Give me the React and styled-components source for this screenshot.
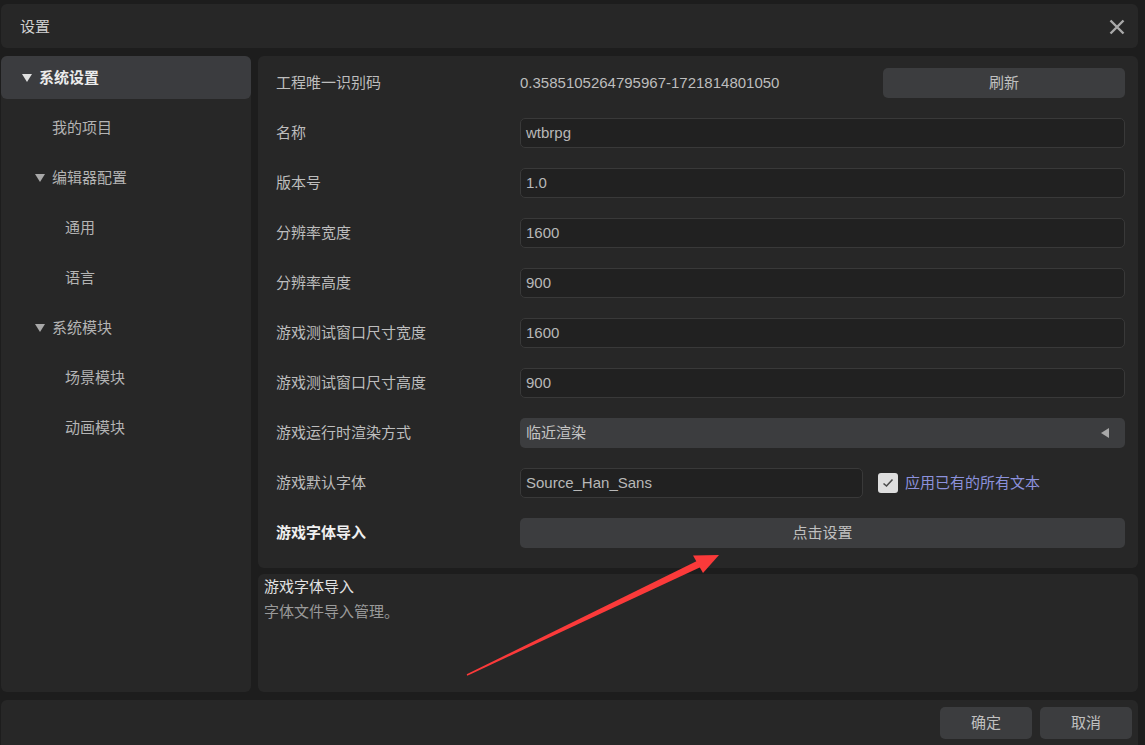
import React from "react";
import styled, { createGlobalStyle } from "styled-components";

const GlobalStyle = createGlobalStyle`
  html, body {
    margin: 0;
    padding: 0;
    background: #1d1d1d;
    font-family: "Liberation Sans", "Noto Sans CJK SC", sans-serif;
    font-size: 15px;
    line-height: 18px;
    color: #bdbdbd;
  }
`;

const Window = styled.div`
  position: relative;
  height: 100vh;
  box-sizing: border-box;
  padding: 4px 7px 0 1px;
  display: flex;
  flex-direction: column;
  gap: 8px;
  overflow: hidden;
`;

const Panel = styled.div`
  box-sizing: border-box;
  background: #272727;
  border-radius: 6px;
`;

const TitleBar = styled(Panel)`
  flex: 0 0 44px;
  display: flex;
  align-items: center;
  justify-content: space-between;
  padding: 1px 13px 0 19px;
  color: #d0d0d0;
`;

const CloseButton = styled.button`
  border: 0;
  background: none;
  padding: 0;
  width: 16px;
  height: 16px;
  display: grid;
  place-items: center;
  cursor: pointer;
`;

const Body = styled.div`
  flex: 0 0 636px;
  display: flex;
  gap: 7px;
`;

const Sidebar = styled(Panel)`
  flex: 0 0 250px;
  display: flex;
  flex-direction: column;
  gap: 7px;
`;

const TreeItem = styled.div`
  height: 43px;
  display: flex;
  align-items: center;
  gap: 7px;
  padding-left: ${({ level, toggle }) => 21 + level * 13 + (toggle ? 0 : 17)}px;
  border-radius: 6px;
  background: ${({ active }) => (active ? "#3b3c3f" : "transparent")};
  color: ${({ active }) => (active ? "#ececec" : "#b4b4b4")};
  font-weight: ${({ active }) => (active ? 700 : 400)};
`;

const Caret = styled.span`
  width: 0;
  height: 0;
  border-left: 5px solid transparent;
  border-right: 5px solid transparent;
  border-top: 8px solid ${({ active }) => (active ? "#e0e0e0" : "#a8a8a8")};
`;

const MainColumn = styled.div`
  flex: 1;
  display: flex;
  flex-direction: column;
  gap: 6px;
`;

const SettingsPanel = styled(Panel)`
  flex: 0 0 512px;
  padding: 12px 13px 0 18px;
  display: flex;
  flex-direction: column;
  gap: 20px;
`;

const Row = styled.div`
  height: 30px;
  display: flex;
  align-items: center;
`;

const Label = styled.div`
  flex: 0 0 244px;
  color: ${({ strong }) => (strong ? "#f0f0f0" : "#bdbdbd")};
  font-weight: ${({ strong }) => (strong ? 700 : 400)};
`;

const Value = styled.div`
  flex: 1;
  color: #bdbdbd;
`;

const Field = styled.div`
  flex: ${({ width }) => (width ? `0 0 ${width}px` : 1)};
  box-sizing: border-box;
  height: 30px;
  display: flex;
  align-items: center;
  padding: 0 6px 0 5px;
  background: #212121;
  border: 1px solid #393939;
  border-radius: 5px;
  color: #b8b8b8;
`;

const Select = styled.div`
  flex: 1;
  height: 30px;
  display: flex;
  align-items: center;
  justify-content: space-between;
  padding: 0 16px 0 6px;
  background: #3c3d3f;
  border-radius: 5px;
  color: #c4c4c4;
`;

const LeftCaret = styled.span`
  width: 0;
  height: 0;
  border-top: 5px solid transparent;
  border-bottom: 5px solid transparent;
  border-right: 8px solid #a8a8a8;
`;

const Button = styled.button`
  flex: ${({ width }) => (width ? `0 0 ${width}px` : 1)};
  height: ${({ tall }) => (tall ? 32 : 30)}px;
  border: 0;
  border-radius: 5px;
  background: #3c3d3f;
  color: #c0c0c0;
  font: inherit;
  cursor: pointer;
`;

const CheckWrap = styled.label`
  display: flex;
  align-items: center;
  gap: 7px;
  margin-left: 15px;
  color: #8c91dc;
`;

const CheckBox = styled.span`
  width: 20px;
  height: 20px;
  border-radius: 3px;
  background: #dedede;
  display: grid;
  place-items: center;
`;

const DescPanel = styled(Panel)`
  flex: 1;
  padding: 4px 6px;
  display: flex;
  flex-direction: column;
  gap: 7px;
`;

const DescTitle = styled.div`
  color: #e2e2e2;
`;

const DescText = styled.div`
  color: #9a9a9a;
`;

const Footer = styled(Panel)`
  flex: 0 0 50px;
  display: flex;
  justify-content: flex-end;
  align-items: flex-start;
  gap: 8px;
  padding: 7px 6px 0 0;
`;

const Annotation = styled.svg`
  position: absolute;
  inset: 0;
  width: 100%;
  height: 100%;
  pointer-events: none;
`;

const tree = [
  { label: "系统设置", level: 0, toggle: true, active: true },
  { label: "我的项目", level: 1 },
  { label: "编辑器配置", level: 1, toggle: true },
  { label: "通用", level: 2 },
  { label: "语言", level: 2 },
  { label: "系统模块", level: 1, toggle: true },
  { label: "场景模块", level: 2 },
  { label: "动画模块", level: 2 },
];

const fields = [
  ["名称", "wtbrpg"],
  ["版本号", "1.0"],
  ["分辨率宽度", "1600"],
  ["分辨率高度", "900"],
  ["游戏测试窗口尺寸宽度", "1600"],
  ["游戏测试窗口尺寸高度", "900"],
];

export default function App() {
  return (
    <>
      <GlobalStyle />
      <Window>
        <TitleBar>
          <span>设置</span>
          <CloseButton aria-label="关闭">
            <svg width="16" height="16" viewBox="0 0 16 16">
              <path d="M1.5 1.5 L14.5 14.5 M14.5 1.5 L1.5 14.5" stroke="#a9a9a9" strokeWidth="2.4" />
            </svg>
          </CloseButton>
        </TitleBar>

        <Body>
          <Sidebar>
            {tree.map((item) => (
              <TreeItem key={item.label} level={item.level} toggle={item.toggle} active={item.active}>
                {item.toggle && <Caret active={item.active} />}
                <span>{item.label}</span>
              </TreeItem>
            ))}
          </Sidebar>

          <MainColumn>
            <SettingsPanel>
              <Row>
                <Label>工程唯一识别码</Label>
                <Value>0.3585105264795967-1721814801050</Value>
                <Button width={242}>刷新</Button>
              </Row>
              {fields.map(([label, value]) => (
                <Row key={label}>
                  <Label>{label}</Label>
                  <Field>{value}</Field>
                </Row>
              ))}
              <Row>
                <Label>游戏运行时渲染方式</Label>
                <Select>
                  <span>临近渲染</span>
                  <LeftCaret />
                </Select>
              </Row>
              <Row>
                <Label>游戏默认字体</Label>
                <Field width={343}>Source_Han_Sans</Field>
                <CheckWrap>
                  <CheckBox>
                    <svg width="12" height="10" viewBox="0 0 12 10">
                      <path d="M1.5 5.5 L4.5 8 L10.5 1.5" fill="none" stroke="#4a4a4a" strokeWidth="1.6" />
                    </svg>
                  </CheckBox>
                  <span>应用已有的所有文本</span>
                </CheckWrap>
              </Row>
              <Row>
                <Label strong>游戏字体导入</Label>
                <Button>点击设置</Button>
              </Row>
            </SettingsPanel>

            <DescPanel>
              <DescTitle>游戏字体导入</DescTitle>
              <DescText>字体文件导入管理。</DescText>
            </DescPanel>
          </MainColumn>
        </Body>

        <Footer>
          <Button width={92} tall>确定</Button>
          <Button width={92} tall>取消</Button>
        </Footer>

        <Annotation viewBox="0 0 1145 745" preserveAspectRatio="none">
          <polygon points="467.3,675.7 466.7,674.3 701.5,558.8 704.5,565.2" fill="#fb3a3a" />
          <polygon points="719,555 693,555.5 703,573" fill="#fb3a3a" />
        </Annotation>
      </Window>
    </>
  );
}
